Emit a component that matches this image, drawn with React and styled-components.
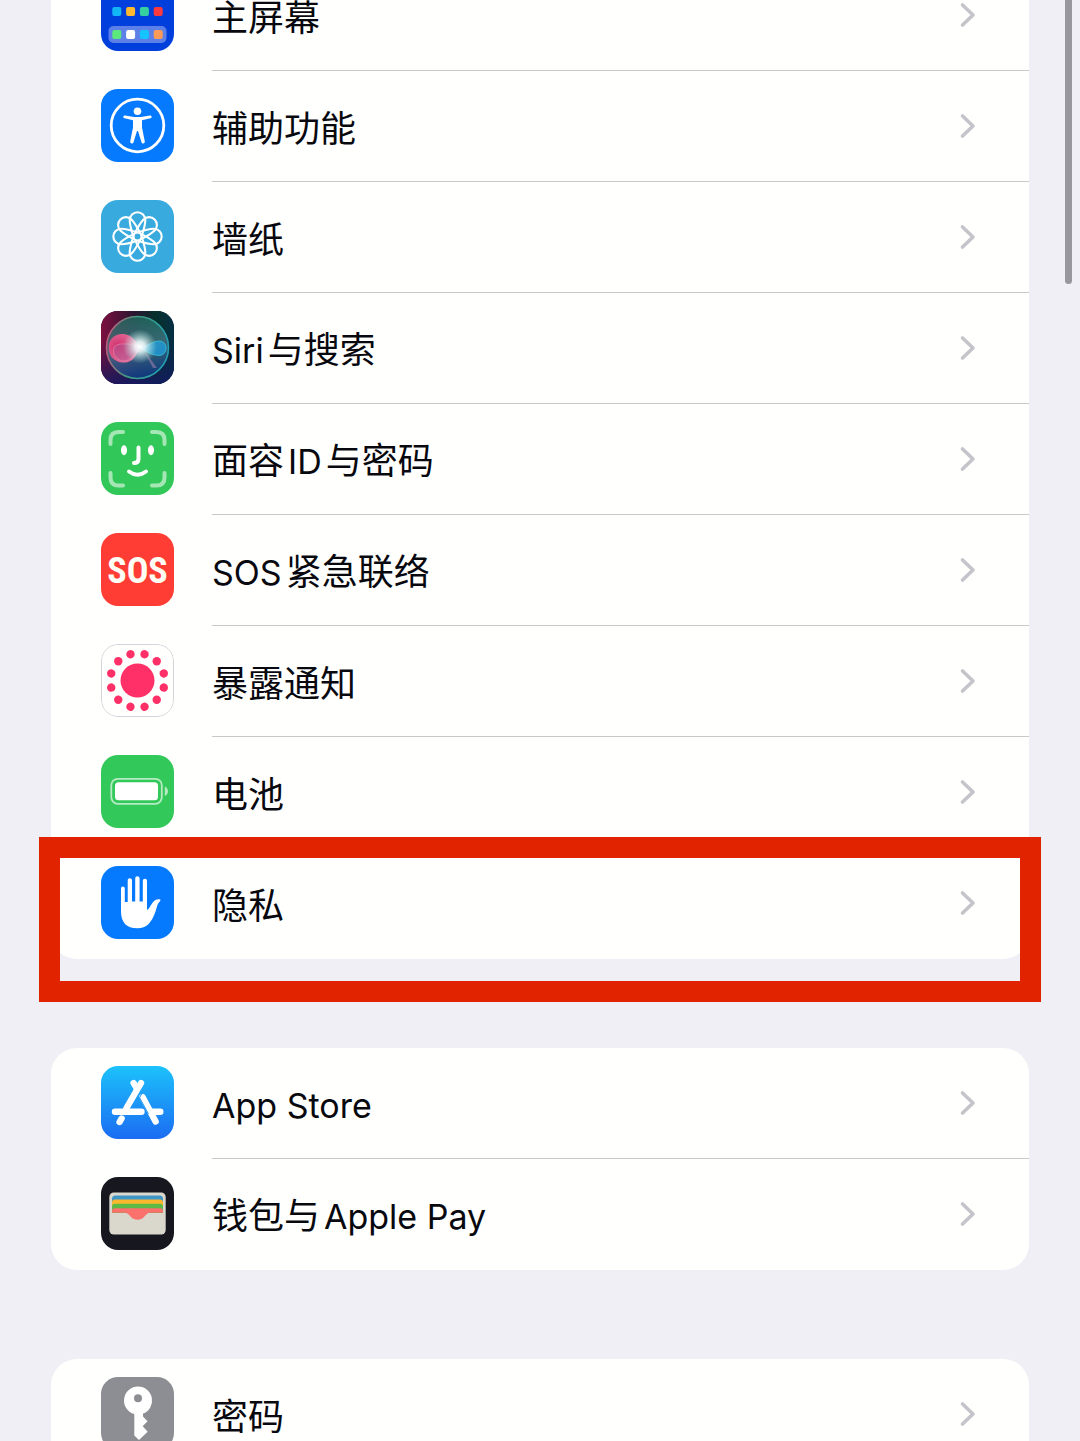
import React from "react";
import styled, { createGlobalStyle } from "styled-components";

const GlobalStyle = createGlobalStyle`
  * {
    box-sizing: border-box;
  }
  body {
    margin: 0;
    background: #f0eff6;
  }
`;
const Screen = styled.div`
  position: relative;
  height: 100vh;
  overflow: hidden;
  background: #f0eff6;
  color: #08080f;
  font-family: Inter, "Noto Sans CJK SC", sans-serif;
`;
const Settings = styled.main`
  display: flex;
  flex-direction: column;
  gap: 89px;
  margin-top: -40px;
  padding: 0 51px;
`;
const Card = styled.ul`
  list-style: none;
  margin: 0;
  padding: 0;
  border-radius: 26px;
  background: #fffffd;
`;
const Item = styled.li`
  position: relative;
`;
const RowLink = styled.a`
  display: flex;
  align-items: stretch;
  gap: 38px;
  height: 111px;
  padding-left: 50px;
  color: inherit;
  text-decoration: none;
`;
const AppIcon = styled.svg`
  flex: none;
  width: 73px;
  height: 73px;
  margin-top: 18px;
  border-radius: 17px;
  overflow: hidden;
  background: ${(props) => props.$background};
`;
const RowBody = styled.div`
  flex: 1;
  display: flex;
  align-items: center;
  justify-content: space-between;
  padding-right: 52px;
  border-bottom: 1px solid ${(props) => (props.$line ? "#c9c9cc" : "transparent")};
`;
const Label = styled.span`
  font-family: "Noto Sans CJK SC", sans-serif;
  font-size: 36px;
  line-height: 52px;
  white-space: nowrap;
`;
const Latin = styled.span`
  font-family: Inter, sans-serif;
  font-size: 34px;
  line-height: 50px;
  margin: 0 4px;
  &:first-child {
    margin-left: 0;
  }
`;
const Arrow = styled.svg`
  width: 18px;
  height: 28px;
`;
const Highlight = styled.div`
  position: absolute;
  inset: -11px -12px -43px;
  border: 21px solid #e12300;
  pointer-events: none;
`;
const ScrollThumb = styled.div`
  position: absolute;
  top: -10px;
  right: 8px;
  width: 7px;
  height: 294px;
  border-radius: 4px;
  background: #98979e;
`;

const HomeScreenIcon = () => (
  <AppIcon viewBox="0 0 73 73" $background="#003fdc">
    <rect x="7.5" y="48" width="58" height="17" rx="5" fill="#5c80e8" />
    {["#12b5f5", "#ffb92e", "#35cfa0", "#ff3a3e"].map((color, i) => (
      <rect key={color} x={11.3 + i * 13.8} y="29" width="9" height="9" rx="2" fill={color} />
    ))}
    {["#5be87c", "#ffffff", "#14c4fb", "#ff9a58"].map((color, i) => (
      <rect key={color} x={11.3 + i * 13.8} y="52" width="9" height="9" rx="2" fill={color} />
    ))}
  </AppIcon>
);

const AccessibilityIcon = () => (
  <AppIcon viewBox="0 0 73 73" $background="#067aff">
    <circle cx="36.5" cy="36.5" r="26.3" fill="none" stroke="#fff" strokeWidth="2.8" />
    <circle cx="36.5" cy="22.3" r="3.8" fill="#fff" />
    <path
      d="M24 26.4 L33 28 H40 L49 26.4 C51 26.2 51.3 28.8 49.3 29.3 L41 31.2 V38.5 L43.8 52.5 C44 54.6 41.2 55.2 40.5 53.2 L37 42 H36 L32.5 53.2 C31.8 55.2 29 54.6 29.2 52.5 L32 38.5 V31.2 L23.7 29.3 C21.7 28.8 22 26.2 24 26.4 Z"
      fill="#fff"
    />
  </AppIcon>
);

const WallpaperIcon = () => (
  <AppIcon viewBox="0 0 73 73" $background="#38aadd">
    <g transform="translate(36.5 36.5)" fill="none" stroke="#fff" strokeWidth="2.1">
      <circle r="4" />
      {[0, 45, 90, 135, 180, 225, 270, 315].map((angle) => (
        <path
          key={angle}
          transform={`rotate(${angle})`}
          d="M-4 0 C-5.8 -5 -7.8 -11 -7.8 -16.4 A7.8 7.8 0 0 1 7.8 -16.4 C7.8 -11 5.8 -5 4 0"
        />
      ))}
    </g>
  </AppIcon>
);

const SiriIcon = () => (
  <AppIcon viewBox="0 0 73 73" $background="#151a3c">
    <defs>
      <linearGradient id="siriBack" x1="0" y1="0" x2="1" y2="0">
        <stop offset="0" stopColor="#7d0f40" />
        <stop offset="0.45" stopColor="#2c1632" />
        <stop offset="0.75" stopColor="#06302b" />
        <stop offset="1" stopColor="#062f45" />
      </linearGradient>
      <linearGradient id="siriShade" x1="0" y1="0" x2="0" y2="1">
        <stop offset="0.4" stopColor="#141a4a" stopOpacity="0" />
        <stop offset="1" stopColor="#141a66" stopOpacity="0.85" />
      </linearGradient>
      <linearGradient id="siriOrb" x1="0.4" y1="0" x2="0.6" y2="1">
        <stop offset="0" stopColor="#1d7a66" />
        <stop offset="0.5" stopColor="#4f7f92" />
        <stop offset="1" stopColor="#0a4290" />
      </linearGradient>
      <linearGradient id="siriRing" x1="0" y1="0.3" x2="1" y2="0.5">
        <stop offset="0" stopColor="#c4587c" />
        <stop offset="0.45" stopColor="#3e9c80" />
        <stop offset="1" stopColor="#239db0" />
      </linearGradient>
      <radialGradient id="siriPink" cx="0.3" cy="0.45" r="0.75">
        <stop offset="0" stopColor="#d92c6c" />
        <stop offset="1" stopColor="#f07fa8" />
      </radialGradient>
      <radialGradient id="siriGlow">
        <stop offset="0" stopColor="#fff" />
        <stop offset="0.3" stopColor="#f2ffff" stopOpacity="0.85" />
        <stop offset="1" stopColor="#a9e8dd" stopOpacity="0" />
      </radialGradient>
    </defs>
    <rect width="73" height="73" fill="url(#siriBack)" />
    <rect width="73" height="73" fill="url(#siriShade)" />
    <circle cx="36.5" cy="36.5" r="31" fill="url(#siriOrb)" fillOpacity="0.7" stroke="url(#siriRing)" strokeWidth="1.6" />
    <path
      d="M39 37 C35 28 28 22 20 23 C10 24 6.5 32 8 40 C10 50 20 53 27 51 C34 49 36 42 39 37 Z"
      fill="url(#siriPink)"
      fillOpacity="0.95"
    />
    <path
      d="M39 37 C31 33 20 31 14 35 C10 41 14 49 22 50 C30 50 34 42 39 37 Z"
      fill="#b05a92"
      fillOpacity="0.55"
      stroke="#e88bad"
      strokeWidth="0.6"
    />
    <path
      d="M39 37 C47 35 52 30 58 30 C64 30 67 36 64 41 C61 47 52 45 39 37 Z"
      fill="#209bd8"
      fillOpacity="0.8"
      stroke="#35c5da"
      strokeWidth="0.8"
    />
    <path d="M42 38 L56 57 L52 57 Z" fill="#d99cc2" fillOpacity="0.4" />
    <circle cx="39" cy="35.5" r="17" fill="url(#siriGlow)" />
  </AppIcon>
);

const FaceIdIcon = () => (
  <AppIcon viewBox="0 0 73 73" $background="#32c759">
    <g fill="none" strokeLinecap="round">
      <path
        d="M9.5 22 V18 Q9.5 10 17.5 10 H22 M51 10 H55.5 Q63.5 10 63.5 18 V22 M63.5 51 V55.5 Q63.5 63.5 55.5 63.5 H51 M22 63.5 H17.5 Q9.5 63.5 9.5 55.5 V51"
        stroke="#a4e7b5"
        strokeWidth="4"
      />
      <path d="M37.5 25.5 V37 Q37.5 41 33 41" stroke="#fff" strokeWidth="4" />
      <path d="M28 49.5 Q36.5 56 45 49.5" stroke="#fff" strokeWidth="4" />
    </g>
    <ellipse cx="23" cy="28.3" rx="3" ry="5" fill="#fff" />
    <ellipse cx="50" cy="28.3" rx="3" ry="5" fill="#fff" />
  </AppIcon>
);

const SosIcon = () => (
  <AppIcon viewBox="0 0 73 73" $background="#ff3d34">
    <text
      x="36.5"
      y="50"
      textAnchor="middle"
      fontFamily="'Liberation Sans Narrow', 'Roboto Condensed', 'Open Sans Condensed', sans-serif"
      fontWeight="700"
      fontSize="36"
      fill="#fffef4"
    >
      SOS
    </text>
  </AppIcon>
);

const ExposureIcon = () => (
  <AppIcon viewBox="0 0 73 73" $background="#fffffd">
    <rect x="0.5" y="0.5" width="72" height="72" rx="16.5" fill="none" stroke="#d3d5dd" />
    <g transform="translate(36.5 36.5)" fill="#ff2f67">
      <circle r="17" />
      {[...Array(12)].map((_, i) => (
        <circle key={i} cy="-27.2" r="4.2" transform={`rotate(${15 + i * 30})`} />
      ))}
    </g>
  </AppIcon>
);

const BatteryIcon = () => (
  <AppIcon viewBox="0 0 73 73" $background="#33c85a">
    <rect x="10.3" y="23.8" width="50.5" height="25" rx="6.5" fill="none" stroke="#b5ebc2" strokeWidth="1.8" />
    <rect x="14" y="27.3" width="43" height="18" rx="3.5" fill="#fff" />
    <path d="M63.8 31.5 C68 33 68 39.5 63.8 41 Z" fill="#b5ebc2" />
  </AppIcon>
);

const PrivacyIcon = () => (
  <AppIcon viewBox="0 0 73 73" $background="#067aff">
    <path
      d="M20 22.5 C20 19.8 23.8 19.8 23.8 22.5 V36 H26.7 V14.5 C26.7 11.4 31 11.4 31 14.5 V35.5 H34.2 V12.5 C34.2 9.4 38.6 9.4 38.6 12.5 V35.5 H41.8 V15 C41.8 12 46 12 46 15 V44 C48 43 49.5 39.8 51 37.5 C53 34 56.5 32.5 59.2 33.4 C60 34.3 58.8 35.3 58 36.3 C56 39 55.8 42 54.5 45.5 C50.5 57 45.5 62.3 36.5 62.3 C25 62.3 20.3 56 20 46 Z"
      fill="#fff"
    />
  </AppIcon>
);

const AppStoreIcon = () => (
  <AppIcon viewBox="0 0 73 73" $background="linear-gradient(#1cc2fb, #1b6cf2)">
    <g fill="none" stroke="#fff" strokeWidth="6.4" strokeLinecap="round">
      <path d="M40 17 L25.5 42" />
      <path d="M32.6 17 L35.5 22" />
      <path d="M41.5 31 L54.6 55.5" />
      <path d="M20.6 52.5 L18.6 56" />
      <path d="M14 45.8 H40.5" />
      <path d="M51 45.8 H59.3" />
    </g>
    <path d="M41.8 25.6 L35.8 37 M38.5 31.5 L47.5 48" stroke="#1e9af7" strokeWidth="1" />
  </AppIcon>
);

const WalletIcon = () => (
  <AppIcon viewBox="0 0 73 73" $background="#17171f">
    <rect x="8.3" y="15.5" width="56.4" height="42" rx="4.5" fill="#dad7cd" />
    <path d="M11 22 Q11 18.5 14.5 18.5 H58.5 Q62 18.5 62 22 V36 H11 Z" fill="#3e96c7" />
    <path d="M11 25.5 Q11 22.6 14 22.6 H59 Q62 22.6 62 25.5 V36 H11 Z" fill="#fcb72c" />
    <path d="M11 29.5 Q11 26.8 14 26.8 H59 Q62 26.8 62 29.5 V36 H11 Z" fill="#5dba46" />
    <path
      d="M11 34 Q11 31.2 14 31.2 H59 Q62 31.2 62 34 V35.8 H50 C46 35.8 45.5 37.5 43 40 C40 43.6 33 43.6 30 40 C27.5 37.5 27 35.8 23 35.8 H11 Z"
      fill="#fb716c"
    />
  </AppIcon>
);

const PasswordIcon = () => (
  <AppIcon viewBox="0 0 73 73" $background="#8d8d94">
    <path
      fillRule="evenodd"
      d="M37 9.5 A14 14 0 0 1 42 36.6 V39.5 L46.5 44.3 L41.7 49.3 L46.7 54.7 L38 63 L33.3 58.5 V37 A14 14 0 0 1 37 9.5 Z M37 17.2 A4 4 0 1 0 37 25.2 A4 4 0 1 0 37 17.2 Z"
      fill="#fff"
    />
  </AppIcon>
);

const groups = [
  [
    { id: "home-screen", icon: HomeScreenIcon, label: "主屏幕" },
    { id: "accessibility", icon: AccessibilityIcon, label: "辅助功能" },
    { id: "wallpaper", icon: WallpaperIcon, label: "墙纸" },
    { id: "siri", icon: SiriIcon, label: <><Latin>Siri</Latin>与搜索</> },
    { id: "face-id", icon: FaceIdIcon, label: <><span>面容</span><Latin>ID</Latin>与密码</> },
    { id: "sos", icon: SosIcon, label: <><Latin>SOS</Latin>紧急联络</> },
    { id: "exposure", icon: ExposureIcon, label: "暴露通知" },
    { id: "battery", icon: BatteryIcon, label: "电池" },
    { id: "privacy", icon: PrivacyIcon, label: "隐私", marked: true },
  ],
  [
    { id: "app-store", icon: AppStoreIcon, label: <Latin>App Store</Latin> },
    { id: "wallet", icon: WalletIcon, label: <><span>钱包与</span><Latin>Apple Pay</Latin></> },
  ],
  [{ id: "passwords", icon: PasswordIcon, label: "密码" }],
];

const Row = ({ id, icon: Icon, label, marked, line }) => (
  <Item>
    <RowLink href={`#${id}`}>
      <Icon />
      <RowBody $line={line}>
        <Label>{label}</Label>
        <Arrow viewBox="0 0 18 28">
          <path
            d="M3.5 4 L14 14 L3.5 24"
            fill="none"
            stroke="#c4c4ca"
            strokeWidth="3.6"
            strokeLinecap="round"
            strokeLinejoin="round"
          />
        </Arrow>
      </RowBody>
    </RowLink>
    {marked && <Highlight />}
  </Item>
);

const App = () => {
  return (
    <Screen>
      <GlobalStyle />
      <Settings>
        {groups.map((rows) => (
          <Card key={rows[0].id}>
            {rows.map((row, i) => (
              <Row key={row.id} {...row} line={i < rows.length - 1 && row.id !== "battery"} />
            ))}
          </Card>
        ))}
      </Settings>
      <ScrollThumb />
    </Screen>
  );
};
export default App;
